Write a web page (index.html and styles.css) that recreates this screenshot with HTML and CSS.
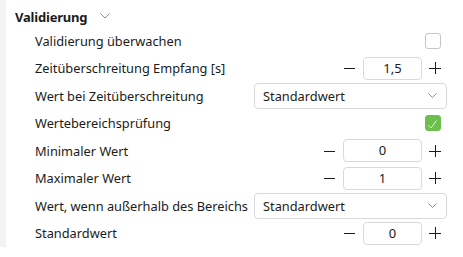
FILE: index.html
```html
<!DOCTYPE html>
<html lang="de">
<head>
<meta charset="utf-8">
<link rel="stylesheet" href="styles.css">
</head>
<body>
<div class="page">
  <div class="rail"></div>
  <div class="panel">
    <div class="section-head">
      <span class="title">Validierung</span>
      <svg class="head-chevron" width="10" height="6" viewBox="0 0 10 6"><path d="M0.5 0.5 L5 5 L9.5 0.5" fill="none" stroke="#8a8a8a" stroke-width="1"/></svg>
    </div>
    <div class="rows">
      <div class="row">
        <span class="label">Validierung überwachen</span>
        <span class="checkbox"></span>
      </div>
      <div class="row">
        <span class="label">Zeitüberschreitung Empfang [s]</span>
        <div class="stepper">
          <svg class="btn" width="12" height="12" viewBox="0 0 12 12"><path d="M0 6.5 H11" stroke="#1b1b1b" stroke-width="1"/></svg>
          <div class="num narrow">1,5</div>
          <svg class="btn" width="12" height="12" viewBox="0 0 12 12"><path d="M0 6.5 H12 M6.5 0 V12" stroke="#1b1b1b" stroke-width="1"/></svg>
        </div>
      </div>
      <div class="row">
        <span class="label">Wert bei Zeitüberschreitung</span>
        <div class="select"><span>Standardwert</span><svg width="9" height="5" viewBox="0 0 9 5"><path d="M0.5 0.5 L4.5 4.5 L8.5 0.5" fill="none" stroke="#8a8a8a" stroke-width="1"/></svg></div>
      </div>
      <div class="row">
        <span class="label">Wertebereichsprüfung</span>
        <span class="checkbox checked"><svg width="16" height="16" viewBox="0 0 16 16"><path d="M3 10 L6 13 L11.5 5.5" fill="none" stroke="#e6f3df" stroke-width="1"/></svg></span>
      </div>
      <div class="row">
        <span class="label">Minimaler Wert</span>
        <div class="stepper">
          <svg class="btn" width="12" height="12" viewBox="0 0 12 12"><path d="M0 6.5 H11" stroke="#1b1b1b" stroke-width="1"/></svg>
          <div class="num wide">0</div>
          <svg class="btn" width="12" height="12" viewBox="0 0 12 12"><path d="M0 6.5 H12 M6.5 0 V12" stroke="#1b1b1b" stroke-width="1"/></svg>
        </div>
      </div>
      <div class="row">
        <span class="label">Maximaler Wert</span>
        <div class="stepper">
          <svg class="btn" width="12" height="12" viewBox="0 0 12 12"><path d="M0 6.5 H11" stroke="#1b1b1b" stroke-width="1"/></svg>
          <div class="num wide">1</div>
          <svg class="btn" width="12" height="12" viewBox="0 0 12 12"><path d="M0 6.5 H12 M6.5 0 V12" stroke="#1b1b1b" stroke-width="1"/></svg>
        </div>
      </div>
      <div class="row">
        <span class="label">Wert, wenn außerhalb des Bereichs</span>
        <div class="select"><span>Standardwert</span><svg width="9" height="5" viewBox="0 0 9 5"><path d="M0.5 0.5 L4.5 4.5 L8.5 0.5" fill="none" stroke="#8a8a8a" stroke-width="1"/></svg></div>
      </div>
      <div class="row">
        <span class="label">Standardwert</span>
        <div class="stepper">
          <svg class="btn" width="12" height="12" viewBox="0 0 12 12"><path d="M0 6.5 H11" stroke="#1b1b1b" stroke-width="1"/></svg>
          <div class="num narrow">0</div>
          <svg class="btn" width="12" height="12" viewBox="0 0 12 12"><path d="M0 6.5 H12 M6.5 0 V12" stroke="#1b1b1b" stroke-width="1"/></svg>
        </div>
      </div>
    </div>
  </div>
</div>
</body>
</html>
```
FILE: styles.css
```css
html, body {
  margin: 0;
  padding: 0;
  background: #ffffff;
}
body {
  font-family: "Noto Sans", "Open Sans", sans-serif;
  font-size: 12.8px;
  color: #1b1b1b;
}
.page {
  display: flex;
  width: 463px;
  height: 257px;
  overflow: hidden;
}
.rail {
  width: 6px;
  height: 247px;
  background: #f3f3f3;
  flex: none;
}
.panel {
  flex: 1;
  padding-left: 9px;
}
.section-head {
  height: 27px;
  box-sizing: border-box;
  padding-top: 7px;
  display: flex;
  align-items: center;
  gap: 13px;
  line-height: 20px;
}
.title {
  font-weight: 700;
  font-size: 13px;
  letter-spacing: -0.2px;
  height: 20px;
}
.head-chevron {
  margin-top: -3px;
}
.rows {
  padding-left: 20px;
  display: grid;
  grid-auto-rows: 27.5px;
}
.row {
  display: flex;
  align-items: center;
  justify-content: space-between;
  padding-right: 22px;
}
.label {
  white-space: nowrap;
}
.checkbox {
  width: 16px;
  height: 16px;
  box-sizing: border-box;
  border: 1px solid #c6c6c6;
  border-radius: 3px;
  background: #fff;
  display: block;
  position: relative;
}
.checkbox.checked {
  background: #6cbf4c;
  border-color: #6cbf4c;
}
.checkbox.checked svg {
  position: absolute;
  left: -1px;
  top: -1px;
}
.stepper {
  display: flex;
  align-items: center;
  gap: 7px;
}
.btn {
  display: block;
}
.num {
  height: 23px;
  box-sizing: border-box;
  border: 1px solid #d9d9d9;
  border-radius: 4px;
  text-align: center;
  line-height: 21px;
  font-size: 13px;
}
.num.narrow { width: 59px; }
.num.wide { width: 79px; }
.select {
  width: 193px;
  height: 26px;
  box-sizing: border-box;
  margin-right: -6px;
  border: 1px solid #d9d9d9;
  border-radius: 4px;
  display: flex;
  align-items: center;
  justify-content: space-between;
  padding: 0 9px 0 8px;
}
```
